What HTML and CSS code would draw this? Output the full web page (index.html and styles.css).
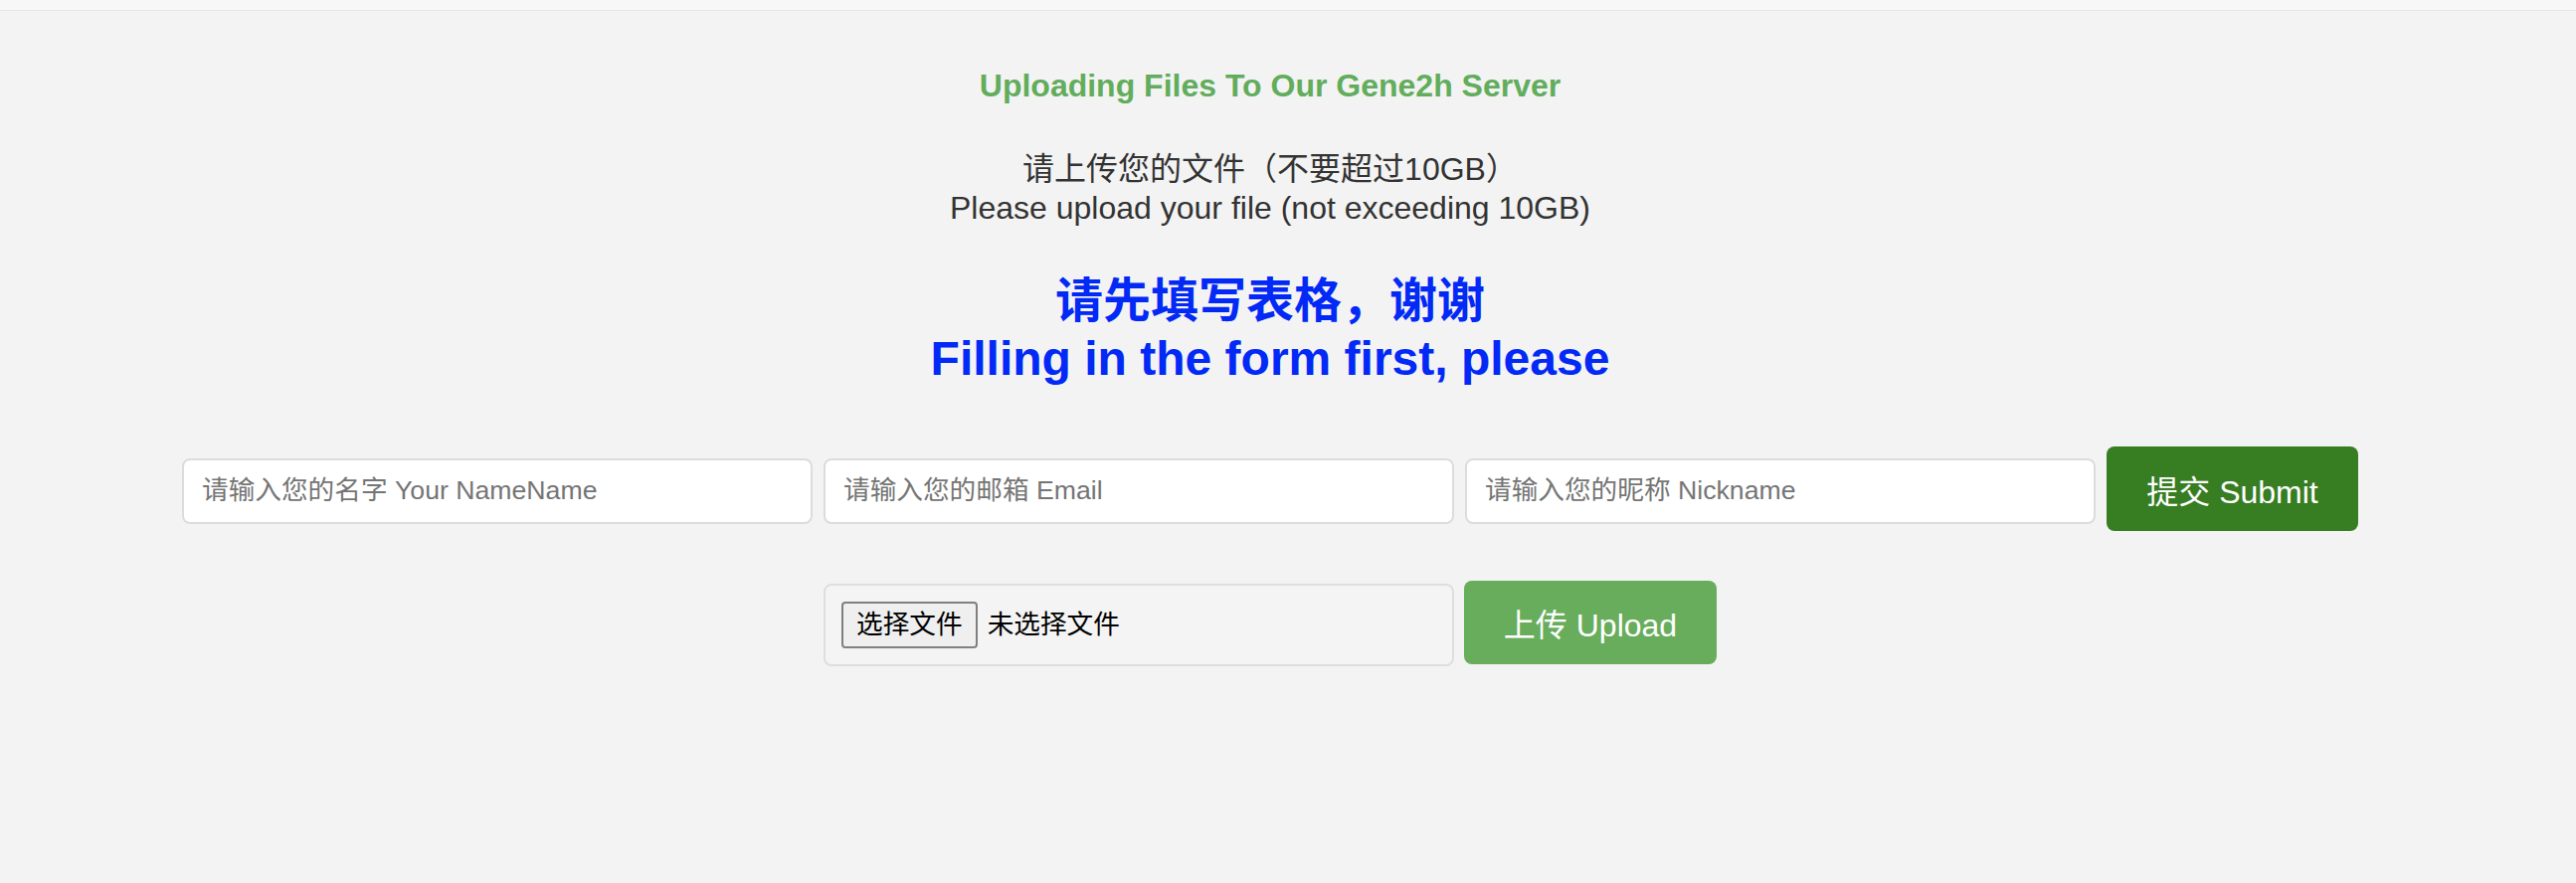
FILE: index.html
```html
<!DOCTYPE html>
<html lang="zh-CN">
<head>
  <meta charset="UTF-8">
  <meta name="viewport" content="width=device-width, initial-scale=1.0">
  <title>Upload Files - Gene2h</title>
  <link rel="stylesheet" href="styles.css">
</head>
<body>

  <div class="top-bar"></div>

  <main class="page">
    <h4 class="title">Uploading Files To Our Gene2h Server</h4>

    <p class="note">请上传您的文件（不要超过10GB）<br>Please upload your file (not exceeding 10GB)</p>

    <h2 class="notice">请先填写表格，谢谢<br>Filling in the form first, please</h2>

    <!-- User info -->
    <form class="info-form" onsubmit="return false;">
      <input class="field" type="text" name="name" placeholder="请输入您的名字 Your NameName">
      <input class="field" type="email" name="email" placeholder="请输入您的邮箱 Email">
      <input class="field" type="text" name="nickname" placeholder="请输入您的昵称 Nickname">
      <button class="button submit" type="submit">提交 Submit</button>
    </form>

    <!-- File upload -->
    <form class="upload-form" onsubmit="return false;">
      <div class="file-box">
        <label class="file-button">选择文件<input type="file" name="file" hidden></label>
        <span class="file-name">未选择文件</span>
      </div>
      <button class="button upload" type="submit">上传 Upload</button>
    </form>
  </main>

</body>
</html>
```

FILE: styles.css
```css
body {
  margin: 0;
  padding: 0;
  background-color: #f3f3f3;
  font-family: "Liberation Sans", Arial, "Noto Sans CJK SC", sans-serif;
  color: #333;
}

.top-bar {
  height: 10px;
  background-color: #f7f7f7;
  border-bottom: 1px solid #e6e6e6;
}

.page {
  padding-right: 36px;
  text-align: center;
}

.title {
  margin: 57px 0 0;
  font-size: 32px;
  line-height: 37px;
  font-weight: bold;
  color: #62ad5c;
}

.note {
  margin: 46px 0 0;
  font-size: 32px;
  line-height: 39px;
  color: #333;
}

.notice {
  margin: 45px 0 0;
  font-size: 48px;
  line-height: 58px;
  font-weight: bold;
  color: #0229f5;
}

.info-form,
.upload-form {
  display: flex;
  justify-content: center;
  align-items: center;
}

.info-form {
  margin-top: 59px;
  gap: 11px;
}

.upload-form {
  margin-top: 48px;
  gap: 10px;
}

.field {
  box-sizing: border-box;
  width: 634px;
  height: 66px;
  margin-top: 4px;
  padding: 0 18px;
  border: 2px solid #dcdcdc;
  border-radius: 8px;
  background-color: #fff;
  font-family: inherit;
  font-size: 26.67px;
  color: #333;
  outline: none;
}

.field::placeholder {
  color: #757575;
}

.button {
  box-sizing: border-box;
  height: 85px;
  border: none;
  border-radius: 8px;
  font-family: inherit;
  font-size: 32px;
  color: #fff;
  cursor: pointer;
}

.submit {
  width: 253px;
  background-color: #377d22;
}

.upload {
  width: 254px;
  height: 84px;
  background-color: #67ad5c;
}

.file-box {
  box-sizing: border-box;
  width: 634px;
  height: 83px;
  margin-top: 5px;
  padding: 0 16px;
  display: flex;
  align-items: center;
  border: 2px solid #dedede;
  border-radius: 8px;
  background-color: #f4f4f4;
  font-size: 26.67px;
  color: #000;
}

.file-button {
  box-sizing: border-box;
  height: 47px;
  padding: 0 13px;
  margin-right: 10px;
  line-height: 43px;
  border: 2px solid #808080;
  border-radius: 4px;
  background-color: #efefef;
  cursor: pointer;
}

.file-name {
  line-height: 43px;
}
```
